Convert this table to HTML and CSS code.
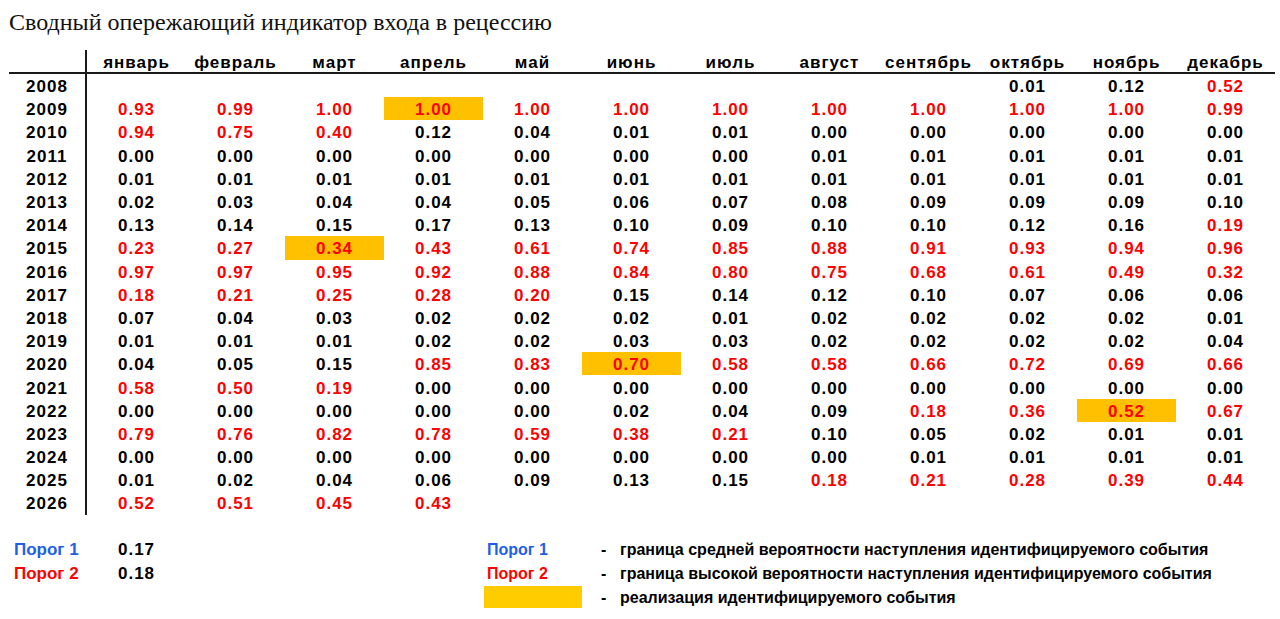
FILE: index.html
```html
<!DOCTYPE html>
<html lang="ru">
<head>
<meta charset="utf-8">
<title>Сводный опережающий индикатор входа в рецессию</title>
<link rel="stylesheet" href="styles.css">
</head>
<body>
<h1 class="title">Сводный опережающий индикатор входа в рецессию</h1>
<table class="grid">
<thead>
<tr><th class="yr"></th><th>январь</th><th>февраль</th><th>март</th><th>апрель</th><th>май</th><th>июнь</th><th>июль</th><th>август</th><th>сентябрь</th><th>октябрь</th><th>ноябрь</th><th>декабрь</th></tr>
</thead>
<tbody>
<tr><td class="yr">2008</td><td></td><td></td><td></td><td></td><td></td><td></td><td></td><td></td><td></td><td>0.01</td><td>0.12</td><td class="r">0.52</td></tr>
<tr><td class="yr">2009</td><td class="r">0.93</td><td class="r">0.99</td><td class="r">1.00</td><td class="r hl">1.00</td><td class="r">1.00</td><td class="r">1.00</td><td class="r">1.00</td><td class="r">1.00</td><td class="r">1.00</td><td class="r">1.00</td><td class="r">1.00</td><td class="r">0.99</td></tr>
<tr><td class="yr">2010</td><td class="r">0.94</td><td class="r">0.75</td><td class="r">0.40</td><td>0.12</td><td>0.04</td><td>0.01</td><td>0.01</td><td>0.00</td><td>0.00</td><td>0.00</td><td>0.00</td><td>0.00</td></tr>
<tr><td class="yr">2011</td><td>0.00</td><td>0.00</td><td>0.00</td><td>0.00</td><td>0.00</td><td>0.00</td><td>0.00</td><td>0.01</td><td>0.01</td><td>0.01</td><td>0.01</td><td>0.01</td></tr>
<tr><td class="yr">2012</td><td>0.01</td><td>0.01</td><td>0.01</td><td>0.01</td><td>0.01</td><td>0.01</td><td>0.01</td><td>0.01</td><td>0.01</td><td>0.01</td><td>0.01</td><td>0.01</td></tr>
<tr><td class="yr">2013</td><td>0.02</td><td>0.03</td><td>0.04</td><td>0.04</td><td>0.05</td><td>0.06</td><td>0.07</td><td>0.08</td><td>0.09</td><td>0.09</td><td>0.09</td><td>0.10</td></tr>
<tr><td class="yr">2014</td><td>0.13</td><td>0.14</td><td>0.15</td><td>0.17</td><td>0.13</td><td>0.10</td><td>0.09</td><td>0.10</td><td>0.10</td><td>0.12</td><td>0.16</td><td class="r">0.19</td></tr>
<tr><td class="yr">2015</td><td class="r">0.23</td><td class="r">0.27</td><td class="r hl">0.34</td><td class="r">0.43</td><td class="r">0.61</td><td class="r">0.74</td><td class="r">0.85</td><td class="r">0.88</td><td class="r">0.91</td><td class="r">0.93</td><td class="r">0.94</td><td class="r">0.96</td></tr>
<tr><td class="yr">2016</td><td class="r">0.97</td><td class="r">0.97</td><td class="r">0.95</td><td class="r">0.92</td><td class="r">0.88</td><td class="r">0.84</td><td class="r">0.80</td><td class="r">0.75</td><td class="r">0.68</td><td class="r">0.61</td><td class="r">0.49</td><td class="r">0.32</td></tr>
<tr><td class="yr">2017</td><td class="r">0.18</td><td class="r">0.21</td><td class="r">0.25</td><td class="r">0.28</td><td class="r">0.20</td><td>0.15</td><td>0.14</td><td>0.12</td><td>0.10</td><td>0.07</td><td>0.06</td><td>0.06</td></tr>
<tr><td class="yr">2018</td><td>0.07</td><td>0.04</td><td>0.03</td><td>0.02</td><td>0.02</td><td>0.02</td><td>0.01</td><td>0.02</td><td>0.02</td><td>0.02</td><td>0.02</td><td>0.01</td></tr>
<tr><td class="yr">2019</td><td>0.01</td><td>0.01</td><td>0.01</td><td>0.02</td><td>0.02</td><td>0.03</td><td>0.03</td><td>0.02</td><td>0.02</td><td>0.02</td><td>0.02</td><td>0.04</td></tr>
<tr><td class="yr">2020</td><td>0.04</td><td>0.05</td><td>0.15</td><td class="r">0.85</td><td class="r">0.83</td><td class="r hl">0.70</td><td class="r">0.58</td><td class="r">0.58</td><td class="r">0.66</td><td class="r">0.72</td><td class="r">0.69</td><td class="r">0.66</td></tr>
<tr><td class="yr">2021</td><td class="r">0.58</td><td class="r">0.50</td><td class="r">0.19</td><td>0.00</td><td>0.00</td><td>0.00</td><td>0.00</td><td>0.00</td><td>0.00</td><td>0.00</td><td>0.00</td><td>0.00</td></tr>
<tr><td class="yr">2022</td><td>0.00</td><td>0.00</td><td>0.00</td><td>0.00</td><td>0.00</td><td>0.02</td><td>0.04</td><td>0.09</td><td class="r">0.18</td><td class="r">0.36</td><td class="r hl">0.52</td><td class="r">0.67</td></tr>
<tr><td class="yr">2023</td><td class="r">0.79</td><td class="r">0.76</td><td class="r">0.82</td><td class="r">0.78</td><td class="r">0.59</td><td class="r">0.38</td><td class="r">0.21</td><td>0.10</td><td>0.05</td><td>0.02</td><td>0.01</td><td>0.01</td></tr>
<tr><td class="yr">2024</td><td>0.00</td><td>0.00</td><td>0.00</td><td>0.00</td><td>0.00</td><td>0.00</td><td>0.00</td><td>0.00</td><td>0.01</td><td>0.01</td><td>0.01</td><td>0.01</td></tr>
<tr><td class="yr">2025</td><td>0.01</td><td>0.02</td><td>0.04</td><td>0.06</td><td>0.09</td><td>0.13</td><td>0.15</td><td class="r">0.18</td><td class="r">0.21</td><td class="r">0.28</td><td class="r">0.39</td><td class="r">0.44</td></tr>
<tr><td class="yr">2026</td><td class="r">0.52</td><td class="r">0.51</td><td class="r">0.45</td><td class="r">0.43</td><td></td><td></td><td></td><td></td><td></td><td></td><td></td><td></td></tr>
</tbody>
</table>

<div class="legend">
  <div class="lg-label blue row1">Порог 1</div>
  <div class="lg-val row1">0.17</div>
  <div class="lg-label red row2">Порог 2</div>
  <div class="lg-val row2">0.18</div>

  <div class="key blue row1">Порог 1</div>
  <div class="desc row1"><span class="dash">-</span>граница средней вероятности наступления идентифицируемого события</div>
  <div class="key red row2">Порог 2</div>
  <div class="desc row2"><span class="dash">-</span>граница высокой вероятности наступления идентифицируемого события</div>
  <div class="swatch row3"></div>
  <div class="desc row3"><span class="dash">-</span>реализация идентифицируемого события</div>
</div>
</body>
</html>
```
FILE: styles.css
```css
html, body {
  margin: 0;
  padding: 0;
  background: #ffffff;
}

body {
  padding-left: 9px;
  font-family: "Liberation Sans", Arial, sans-serif;
  color: #000;
}

.title {
  margin: 8px 0 14px 0;
  font-family: "Liberation Serif", "Times New Roman", serif;
  font-weight: normal;
  font-size: 24px;
  line-height: 28px;
  color: #111;
}

.grid {
  border-collapse: separate;
  border-spacing: 0;
  table-layout: fixed;
  width: 1266px;
  font-weight: bold;
  font-size: 17px;
  letter-spacing: 1px;
}

.grid th,
.grid td {
  width: 99px;
  padding: 0;
  text-align: center;
  white-space: nowrap;
}

.grid th {
  padding-top: 4px;
  line-height: 18px;
  border-bottom: 2px solid #1a1a1a;
  font-weight: bold;
}

.grid tbody tr {
  height: 23.2px;
}

.grid td {
  padding-top: 2px;
  line-height: 21px;
}

.grid .yr {
  width: 76px;
  border-right: 2px solid #1a1a1a;
  text-align: center;
}

.r {
  color: #ff0000;
}

.hl {
  background: #ffc000;
}

.legend {
  display: grid;
  grid-template-columns: 78px repeat(12, 99px);
  grid-template-rows: 24px 24px 24px;
  margin-top: 23px;
  font-weight: bold;
  line-height: 24px;
}

.row1 { grid-row: 1; }
.row2 { grid-row: 2; }
.row3 { grid-row: 3; }

.lg-label {
  grid-column: 1;
  font-size: 17px;
  padding-left: 5px;
}

.lg-val {
  grid-column: 2;
  text-align: center;
  font-size: 17px;
  letter-spacing: 1px;
}

.key {
  grid-column: 6;
  font-size: 16px;
  padding-left: 4px;
}

.swatch {
  grid-column: 6;
  height: 22px;
  margin-left: 1px;
  background: #ffcc00;
}

.desc {
  grid-column: 7 / 14;
  font-size: 16px;
  white-space: nowrap;
}

.dash {
  display: inline-block;
  width: 38px;
  padding-left: 19px;
  box-sizing: border-box;
}

.blue {
  color: #1f5fe8;
}

.red {
  color: #ff0000;
}
```
